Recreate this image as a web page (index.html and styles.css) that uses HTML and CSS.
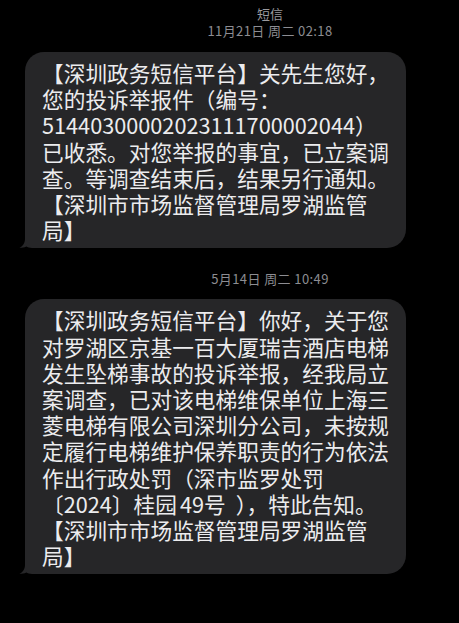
FILE: index.html
```html
<!DOCTYPE html>
<html lang="zh-CN">
<head>
<meta charset="utf-8">
<title>短信</title>
<link rel="stylesheet" href="styles.css">
</head>
<body>
<main class="thread">
  <header class="stamp stamp-first">
    <div class="stamp-title">短信</div>
    <div class="stamp-date">11月21日 周二 02:18</div>
  </header>
  <div class="bubble">
    <svg class="tail" width="26" height="20" viewBox="0 0 26 20"><path d="M7 0H26V20H14C11.5 20 9.5 19.4 8.3 18.6C6.3 19.7 4 20 1.5 20C4.5 18.2 7 15.5 7 11Z"/></svg>
    <p class="text">【深圳政务短信平台】关先生您好，<br>您的投诉举报件（编号：<br>51440300002023111700002044）<br>已收悉。对您举报的事宜，已立案调<br>查。等调查结束后，结果另行通知。<br>【深圳市市场监督管理局罗湖监管<br>局】</p>
  </div>
  <header class="stamp stamp-second">
    <div class="stamp-date">5月14日 周二 10:49</div>
  </header>
  <div class="bubble">
    <svg class="tail" width="26" height="20" viewBox="0 0 26 20"><path d="M7 0H26V20H14C11.5 20 9.5 19.4 8.3 18.6C6.3 19.7 4 20 1.5 20C4.5 18.2 7 15.5 7 11Z"/></svg>
    <p class="text">【深圳政务短信平台】你好，关于您<br>对罗湖区京基一百大厦瑞吉酒店电梯<br>发生坠梯事故的投诉举报，经我局立<br>案调查，已对该电梯维保单位上海三<br>菱电梯有限公司深圳分公司，未按规<br>定履行电梯维护保养职责的行为依法<br>作出行政处罚（深市监罗处罚<br>〔2024〕桂园<span class="thin"></span>49号<span class="wide"></span>），特此告知。<br>【深圳市市场监督管理局罗湖监管<br>局】</p>
  </div>
</main>
</body>
</html>
```

FILE: styles.css
```css
html, body {
  margin: 0;
  padding: 0;
  background: #000;
}

body {
  width: 459px;
  height: 623px;
  overflow: hidden;
  font-family: "Noto Sans CJK SC", "Noto Sans", sans-serif;
}

.thread {
  display: flex;
  flex-direction: column;
  align-items: flex-start;
}

.stamp {
  align-self: stretch;
  padding-left: 81px;
  text-align: center;
  color: #8d8d92;
}

.stamp-first {
  padding-top: 6px;
  margin-bottom: 14px;
}

.stamp-second {
  margin-top: 21px;
  margin-bottom: 13px;
}

.stamp-title {
  font-size: 13px;
  line-height: 15px;
  color: #9a9a9e;
}

.stamp-date {
  font-size: 13px;
  line-height: 15px;
  letter-spacing: 0.4px;
  margin-top: 2px;
}

.bubble {
  position: relative;
  margin-left: 25px;
  width: 381px;
  box-sizing: border-box;
  padding: 8px 17px 5px;
  border-radius: 19px;
  background: #262628;
}

.tail {
  position: absolute;
  left: -7px;
  bottom: 0;
  fill: #262628;
  display: block;
}

.text {
  position: relative;
  margin: 0;
  color: #ececee;
  font-size: 21.7px;
  line-height: 26.2px;
  white-space: nowrap;
}

.thin {
  display: inline-block;
  width: 3px;
}

.wide {
  display: inline-block;
  width: 10px;
}
```
